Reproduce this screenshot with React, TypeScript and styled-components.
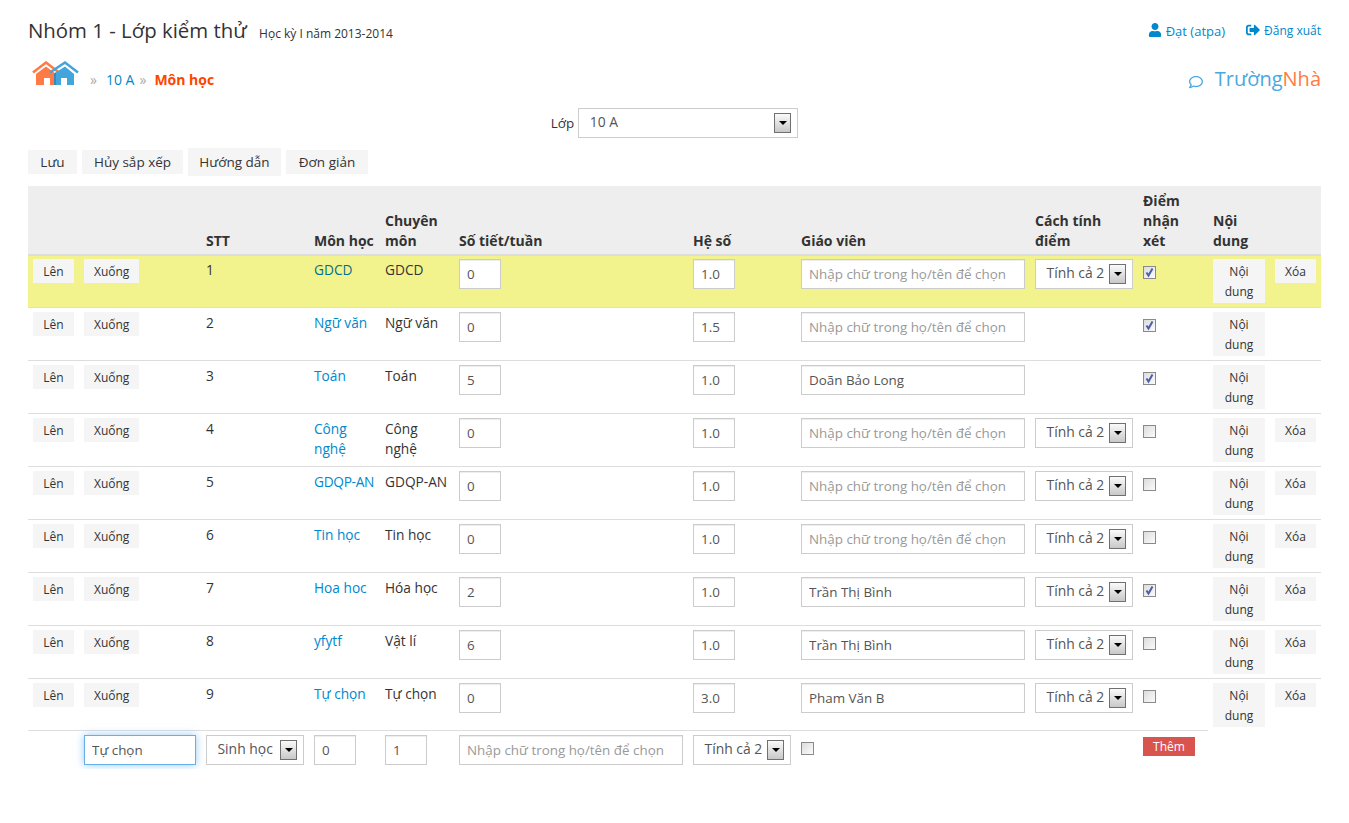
import { createGlobalStyle, styled } from 'styled-components';
import { FaUser, FaSignOutAlt, FaRegComment } from 'react-icons/fa';

const GlobalStyle = createGlobalStyle`
  html, body { margin: 0; padding: 0; background: #fff; }
  body {
    font-family: "Open Sans", "Liberation Sans", Arial, sans-serif;
    font-size: 14px;
    line-height: 20px;
    color: #333;
  }
`;

type Subject = {
  no: number;
  name: string;
  major: string;
  hours: string;
  factor: string;
  teacher: string;
  method: boolean;
  comment: boolean;
  remove: boolean;
};

const PLACEHOLDER = 'Nhập chữ trong họ/tên để chọn';

const SUBJECTS: Subject[] = [
  { no: 1, name: 'GDCD', major: 'GDCD', hours: '0', factor: '1.0', teacher: '', method: true, comment: true, remove: true },
  { no: 2, name: 'Ngữ văn', major: 'Ngữ văn', hours: '0', factor: '1.5', teacher: '', method: false, comment: true, remove: false },
  { no: 3, name: 'Toán', major: 'Toán', hours: '5', factor: '1.0', teacher: 'Doãn Bảo Long', method: false, comment: true, remove: false },
  { no: 4, name: 'Công nghệ', major: 'Công nghệ', hours: '0', factor: '1.0', teacher: '', method: true, comment: false, remove: true },
  { no: 5, name: 'GDQP-AN', major: 'GDQP-AN', hours: '0', factor: '1.0', teacher: '', method: true, comment: false, remove: true },
  { no: 6, name: 'Tin học', major: 'Tin học', hours: '0', factor: '1.0', teacher: '', method: true, comment: false, remove: true },
  { no: 7, name: 'Hoa hoc', major: 'Hóa học', hours: '2', factor: '1.0', teacher: 'Trần Thị Bình', method: true, comment: true, remove: true },
  { no: 8, name: 'yfytf', major: 'Vật lí', hours: '6', factor: '1.0', teacher: 'Trần Thị Bình', method: true, comment: false, remove: true },
  { no: 9, name: 'Tự chọn', major: 'Tự chọn', hours: '0', factor: '3.0', teacher: 'Pham Văn B', method: true, comment: false, remove: true },
];

const COLUMNS = [51, 122, 108, 71, 74, 234, 108, 234, 108, 70, 62, 51];

const Page = styled.div`
  padding: 0 28px;
  width: 1293px;
`;

const TopBar = styled.div`
  display: flex;
  justify-content: space-between;
  align-items: flex-start;
  height: 56px;
  padding-top: 16px;
  box-sizing: border-box;
`;

const Title = styled.h1`
  margin: -1px 0 0;
  font-size: 20.4px;
  font-weight: 400;
  line-height: 30px;
  color: #333;
  small {
    font-size: 12px;
    margin-left: 7px;
    color: #333;
  }
`;

const UserLinks = styled.div`
  display: flex;
  gap: 21px;
  line-height: 30px;
`;

const UserLink = styled.a<{ $large?: boolean }>`
  display: flex;
  align-items: center;
  gap: 4px;
  font-size: ${(p) => (p.$large ? '13px' : '12px')};
  color: #0088cc;
  svg { font-size: 14px; margin-top: -2px; }
`;

const CrumbBar = styled.div`
  display: flex;
  justify-content: space-between;
  align-items: flex-end;
  height: 36px;
  box-sizing: border-box;
  padding: 0 0 2px 4px;
`;

const Crumbs = styled.div`
  display: flex;
  align-items: flex-end;
  svg { margin-bottom: 5px; }
`;

const CrumbLink = styled.a`
  color: #0088cc;
  margin-left: 9px;
`;

const CrumbSep = styled.span<{ $first?: boolean }>`
  color: #aaa;
  margin-left: ${(p) => (p.$first ? '11px' : '5px')};
`;

const CrumbCurrent = styled.b`
  color: #ff4500;
  margin-left: 8px;
`;

const Brand = styled.div`
  display: flex;
  align-items: center;
  margin-bottom: -1px;
  font-size: 20px;
  line-height: 24px;
  color: #4aa8df;
  svg { font-size: 14px; margin: 5px 12px 0 0; }
  span { color: #ff7a45; }
`;

const ClassRow = styled.div`
  display: flex;
  justify-content: center;
  align-items: center;
  gap: 4px;
  margin-top: 16px;
  padding-left: 0;
  font-size: 13.4px;
`;

const SelectBox = styled.div<{ $width: number }>`
  width: ${(p) => p.$width}px;
  height: 30px;
  box-sizing: border-box;
  display: flex;
  justify-content: space-between;
  align-items: center;
  padding: 0 6px 2px 10.5px;
  font-size: 13.9px;
  background: #fff;
  border: 1px solid #ccc;
  color: #555;
  white-space: nowrap;
`;

const SelectArrow = styled.i`
  width: 17px;
  height: 20px;
  box-sizing: border-box;
  flex: none;
  margin-top: 2px;
  display: flex;
  align-items: center;
  justify-content: center;
  border: 1px solid #707070;
  background: linear-gradient(#fafafa, #c8c8c8);
  &::after {
    content: '';
    border: 4px solid transparent;
    border-top: 4px solid #000;
    border-bottom: 0;
  }
`;

const Toolbar = styled.div`
  display: flex;
  align-items: center;
  gap: 5px;
  margin-top: 10px;
  height: 28px;
  margin-bottom: 10px;
`;

const Button = styled.button<{ $width: number; $tall?: boolean }>`
  font: inherit;
  font-size: 13.5px;
  width: ${(p) => p.$width}px;
  height: ${(p) => (p.$tall ? '28px' : '24px')};
  padding: 0;
  border: 0;
  background: #f5f5f5;
  color: #333;
`;

const SmallButton = styled.button`
  font: inherit;
  font-size: 12px;
  line-height: 20px;
  display: block;
  min-width: 41px;
  min-height: 24px;
  padding: 3px 10px 1px;
  border: 0;
  background: #f5f5f5;
  color: #333;
`;

const Grid = styled.table`
  width: 1293px;
  table-layout: fixed;
  border-collapse: separate;
  border-spacing: 0;
`;

const HeadCell = styled.th`
  padding: 5px 5px 3px;
  background: #eee;
  border-bottom: 2px solid #ddd;
  text-align: left;
  vertical-align: bottom;
  font-weight: 700;
  color: #333;
`;

const Row = styled.tr<{ $active?: boolean }>`
  background: ${(p) => (p.$active ? '#f3f38d' : 'transparent')};
  &:first-child td { border-top: 0; padding-top: 3px; }
  &:nth-child(9) td { padding-bottom: 3px; }
`;

const Cell = styled.td`
  padding: 4px 5px;
  border-top: 1px solid #ddd;
  vertical-align: top;
`;

const CellText = styled.div`
  padding-top: 1px;
  font-size: 13.7px;
`;

const NameLink = styled.a<{ $active?: boolean; $nowrap?: boolean }>`
  display: block;
  padding-top: 1px;
  font-size: 13.7px;
  white-space: ${(p) => (p.$nowrap ? 'nowrap' : 'normal')};
  letter-spacing: ${(p) => (p.$nowrap ? '-0.3px' : '0')};
  color: ${(p) => (p.$active ? '#00708f' : '#0088cc')};
`;

const Input = styled.input<{ $width: number; $focused?: boolean }>`
  font: inherit;
  font-size: 13.4px;
  display: block;
  width: ${(p) => p.$width}px;
  height: 30px;
  box-sizing: border-box;
  padding: 0 7px;
  background: #fff;
  color: #555;
  outline: 0;
  border: 1px solid ${(p) => (p.$focused ? '#66afe9' : '#ccc')};
  box-shadow: ${(p) => (p.$focused ? '0 0 8px rgba(82, 168, 236, 0.6)' : 'inset 0 1px 1px rgba(0, 0, 0, 0.075)')};
  &::placeholder { color: #999; opacity: 1; }
`;

const CheckMark = styled.span`
  display: block;
  width: 13px;
  height: 13px;
  box-sizing: border-box;
  margin-top: 7px;
  border: 1px solid #8a8a8a;
  background: linear-gradient(135deg, #dcdcdc, #fbfbfb);
  svg { display: block; }
`;

const AddButton = styled.button`
  font: inherit;
  font-size: 12px;
  line-height: 19px;
  display: block;
  width: 52px;
  height: 19px;
  margin-top: 2px;
  padding: 0;
  border: 0;
  background: #d9534f;
  color: #fff;
`;

const Check = ({ checked }: { checked: boolean }) => (
  <CheckMark>
    {checked && (
      <svg width="11" height="11" viewBox="0 0 11 11">
        <path d="M2.5 5.5 L4.5 8.5 L8.5 1.5" fill="none" stroke="#4a5fa8" strokeWidth="2" />
      </svg>
    )}
  </CheckMark>
);

const HomeIcon = () => (
  <svg width="47" height="24" viewBox="0 0 47 24">
    <path d="M1 11.5 14 1.5 27 11.5" fill="none" stroke="#ff7a45" strokeWidth="2.5" />
    <path d="M4 13 14 5.5 24 13V24H18V17H12V24H4Z" fill="#ff7a45" />
    <path d="M18 11.5 33 1.5 46 11.5" fill="none" stroke="#42a5dc" strokeWidth="2.5" />
    <path d="M22 12.5 33 5.5 42 13V24H35V17H29V24H22Z" fill="#42a5dc" />
    <path d="M22 12.5 24 11.5V24H22Z" fill="#3a87b8" />
  </svg>
);

const App = () => (
  <Page>
    <GlobalStyle />
    <TopBar>
      <Title>
        Nhóm 1 - Lớp kiểm thử <small>Học kỳ I năm 2013-2014</small>
      </Title>
      <UserLinks>
        <UserLink $large><FaUser /> Đạt (atpa)</UserLink>
        <UserLink><FaSignOutAlt /> Đăng xuất</UserLink>
      </UserLinks>
    </TopBar>

    <CrumbBar>
      <Crumbs>
        <HomeIcon />
        <CrumbSep $first>»</CrumbSep>
        <CrumbLink>10 A</CrumbLink>
        <CrumbSep>»</CrumbSep>
        <CrumbCurrent>Môn học</CrumbCurrent>
      </Crumbs>
      <Brand>
        <FaRegComment />
        Trường<span>Nhà</span>
      </Brand>
    </CrumbBar>

    <ClassRow>
      Lớp
      <SelectBox $width={220}>10 A<SelectArrow /></SelectBox>
    </ClassRow>

    <Toolbar>
      <Button $width={49}>Lưu</Button>
      <Button $width={101}>Hủy sắp xếp</Button>
      <Button $width={93} $tall>Hướng dẫn</Button>
      <Button $width={82}>Đơn giản</Button>
    </Toolbar>

    <Grid>
      <colgroup>
        {COLUMNS.map((w, i) => <col key={i} width={w} />)}
      </colgroup>
      <thead>
        <tr>
          <HeadCell />
          <HeadCell />
          <HeadCell>STT</HeadCell>
          <HeadCell>Môn học</HeadCell>
          <HeadCell>Chuyên môn</HeadCell>
          <HeadCell>Số tiết/tuần</HeadCell>
          <HeadCell>Hệ số</HeadCell>
          <HeadCell>Giáo viên</HeadCell>
          <HeadCell>Cách tính điểm</HeadCell>
          <HeadCell>Điểm nhận xét</HeadCell>
          <HeadCell>Nội dung</HeadCell>
          <HeadCell />
        </tr>
      </thead>
      <tbody>
        {SUBJECTS.map((s) => (
          <Row key={s.no} $active={s.no === 1}>
            <Cell><SmallButton>Lên</SmallButton></Cell>
            <Cell><SmallButton>Xuống</SmallButton></Cell>
            <Cell><CellText>{s.no}</CellText></Cell>
            <Cell><NameLink $active={s.no === 1} $nowrap={s.name.includes('-')}>{s.name}</NameLink></Cell>
            <Cell><CellText>{s.major}</CellText></Cell>
            <Cell><Input $width={42} defaultValue={s.hours} /></Cell>
            <Cell><Input $width={42} defaultValue={s.factor} /></Cell>
            <Cell><Input $width={224} defaultValue={s.teacher} placeholder={PLACEHOLDER} /></Cell>
            <Cell>{s.method && <SelectBox $width={98}>Tính cả 2<SelectArrow /></SelectBox>}</Cell>
            <Cell><Check checked={s.comment} /></Cell>
            <Cell><SmallButton>Nội dung</SmallButton></Cell>
            <Cell>{s.remove && <SmallButton>Xóa</SmallButton>}</Cell>
          </Row>
        ))}
        <Row>
          <Cell />
          <Cell><Input $width={112} $focused defaultValue="Tự chọn" /></Cell>
          <Cell><SelectBox $width={98}>Sinh học<SelectArrow /></SelectBox></Cell>
          <Cell><Input $width={42} defaultValue="0" /></Cell>
          <Cell><Input $width={42} defaultValue="1" /></Cell>
          <Cell><Input $width={224} placeholder={PLACEHOLDER} /></Cell>
          <Cell><SelectBox $width={98}>Tính cả 2<SelectArrow /></SelectBox></Cell>
          <Cell><Check checked={false} /></Cell>
          <Cell />
          <Cell><AddButton>Thêm</AddButton></Cell>
        </Row>
      </tbody>
    </Grid>
  </Page>
);

export default App;
